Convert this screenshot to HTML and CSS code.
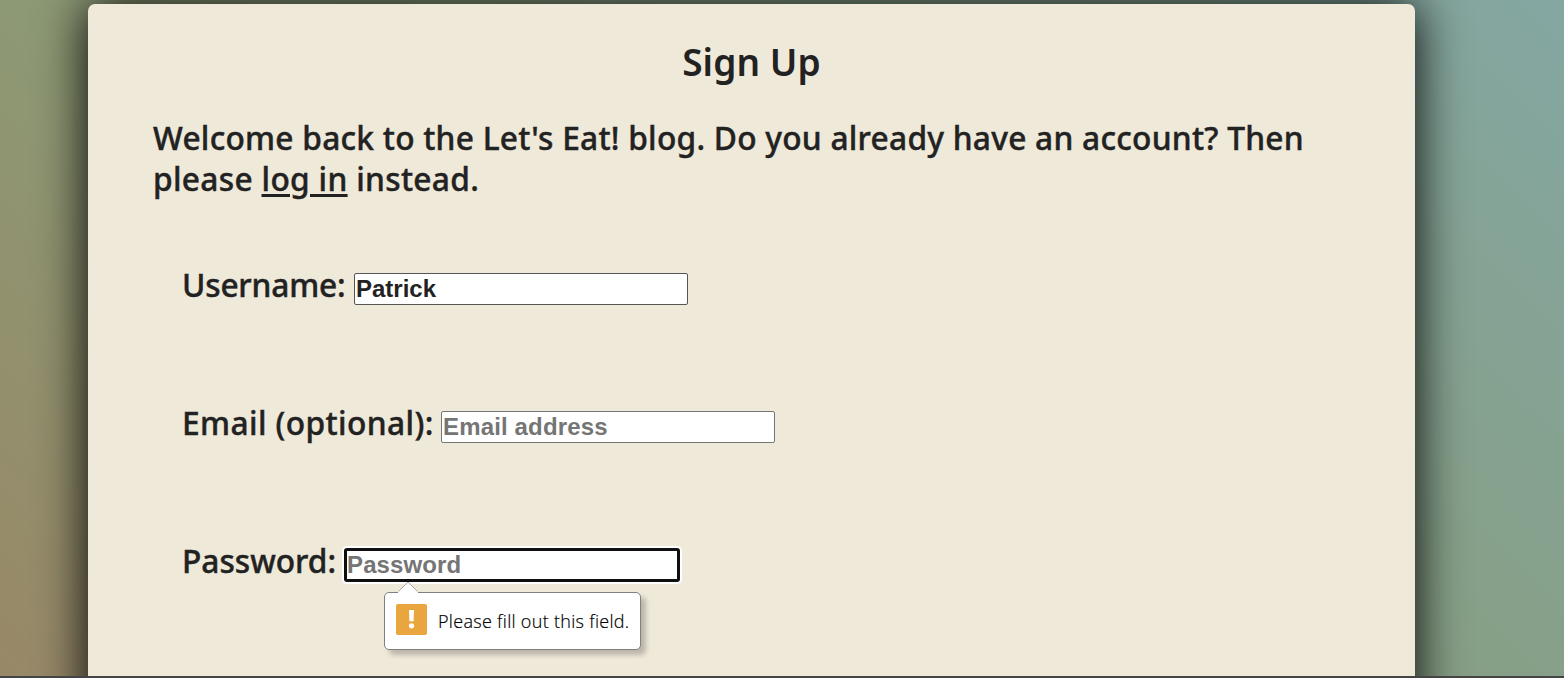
FILE: index.html
```html
<!DOCTYPE html>
<html lang="en">
<head>
<meta charset="utf-8">
<title>Sign Up</title>
<link rel="stylesheet" href="styles.css">
</head>
<body>
<div class="scene">
<main class="card">
  <h1 class="title">Sign Up</h1>
  <p class="intro"><span class="intro-first">Welcome back to the Let's Eat! blog. Do you already have an account? Then</span><br><span class="intro-second">please <a class="link" href="#">log in</a> instead.</span></p>
  <form class="form">
    <div class="field">
      <label class="label label-user" for="user">Username:</label>
      <input class="input input-filled" id="user" type="text" value="Patrick">
    </div>
    <div class="field">
      <label class="label label-email" for="email">Email (optional):</label>
      <input class="input input-email" id="email" type="text" placeholder="Email address">
    </div>
    <div class="field">
      <label class="label label-pass" for="pass">Password:</label>
      <div class="control">
        <input class="input input-focus" id="pass" type="password" placeholder="Password">
        <div class="tooltip">
          <svg class="arrow" width="20" height="12" viewBox="0 0 20 12"><path d="M0 11 10 1l10 10v1H0z" fill="#fff"/><path d="M0.5 10.5 10 1l9.5 9.5" fill="none" stroke="#aaa"/></svg>
          <svg class="warning" width="31" height="31" viewBox="0 0 31 31"><rect width="31" height="31" rx="2" fill="#e9a63e"/><path d="M13 6h5l-.4 11.2h-4.2z" fill="#fff"/><circle cx="15.5" cy="21.8" r="2.6" fill="#fff"/></svg>
          <span class="message">Please fill out this field.</span>
        </div>
      </div>
    </div>
  </form>
</main>
</div>
<footer class="edge"></footer>
</body>
</html>
```
FILE: styles.css
```css
* { box-sizing: border-box; }
body {
  margin: 0;
  font-family: "Noto Sans", sans-serif;
  font-weight: 500;
  color: #222;
}
.scene {
  height: 676px;
  overflow: hidden;
  padding-top: 4px;
  background: linear-gradient(45deg, #988867 0%, #8d9874 30%, #86a089 70%, #84a7a2 100%);
}
.card {
  width: 1327px;
  height: 760px;
  margin-left: 88px;
  padding: 33px 65px 0;
  background: #efe9d9;
  border-radius: 7px;
  box-shadow: 0 0 50px #000;
}
.title {
  margin: 0;
  text-align: center;
  font-size: 37px;
  line-height: 50px;
  font-weight: 600;
  letter-spacing: 0.1px;
}
.intro {
  margin: 30px 0 0;
  font-size: 31.7px;
  line-height: 41px;
  white-space: nowrap;
  -webkit-text-stroke: 0.4px #222;
}
.intro-first { letter-spacing: 0.245px; }
.intro-second { letter-spacing: 0.31px; }
.link { color: inherit; text-decoration-thickness: 3px; text-underline-offset: 3px; }
.form { padding: 65px 29px 0; }
.field {
  height: 138px;
  display: flex;
  align-items: flex-start;
  font-size: 31.7px;
}
.label {
  flex: none;
  line-height: 41px;
  white-space: nowrap;
  -webkit-text-stroke: 0.4px #222;
}
.label-user { width: 172px; letter-spacing: -0.2px; }
.label-email { width: 259px; letter-spacing: 0.39px; }
.label-pass { width: 163px; letter-spacing: -0.02px; }
.control { position: relative; }
.input {
  display: block;
  width: 334px;
  height: 32px;
  margin-top: 9px;
  padding: 1px 1px;
  border: 1px solid #767676;
  border-radius: 2px;
  background: #fff;
  color: #222;
  font: bold 24px/28px "Liberation Sans", sans-serif;
}
.input::placeholder { color: #757575; opacity: 1; }
.input-filled { border-color: #555; }
.input-email { letter-spacing: 0.15px; }
.input-focus { outline: 3px solid #101010; outline-offset: -2px; box-shadow: 0 0 0 3px #fff; letter-spacing: 0.12px; }
.tooltip {
  position: absolute;
  left: 39px;
  top: 52px;
  width: 257px;
  height: 58px;
  display: flex;
  align-items: center;
  padding: 0 0 4px 11px;
  border: 1px solid #808080;
  border-radius: 5px;
  background: #fff;
  box-shadow: 5px 5px 5px rgba(0, 0, 0, .22);
}
.arrow { position: absolute; left: 13px; top: -12px; }
.warning { flex: none; }
.message {
  margin: 3px 0 0 11px;
  font: 300 18px/24px "Open Sans", sans-serif;
  letter-spacing: 0.3px;
  -webkit-text-stroke: 0.2px #000;
  color: #000;
  white-space: nowrap;
}
.edge { height: 2px; background: #444; }
```
